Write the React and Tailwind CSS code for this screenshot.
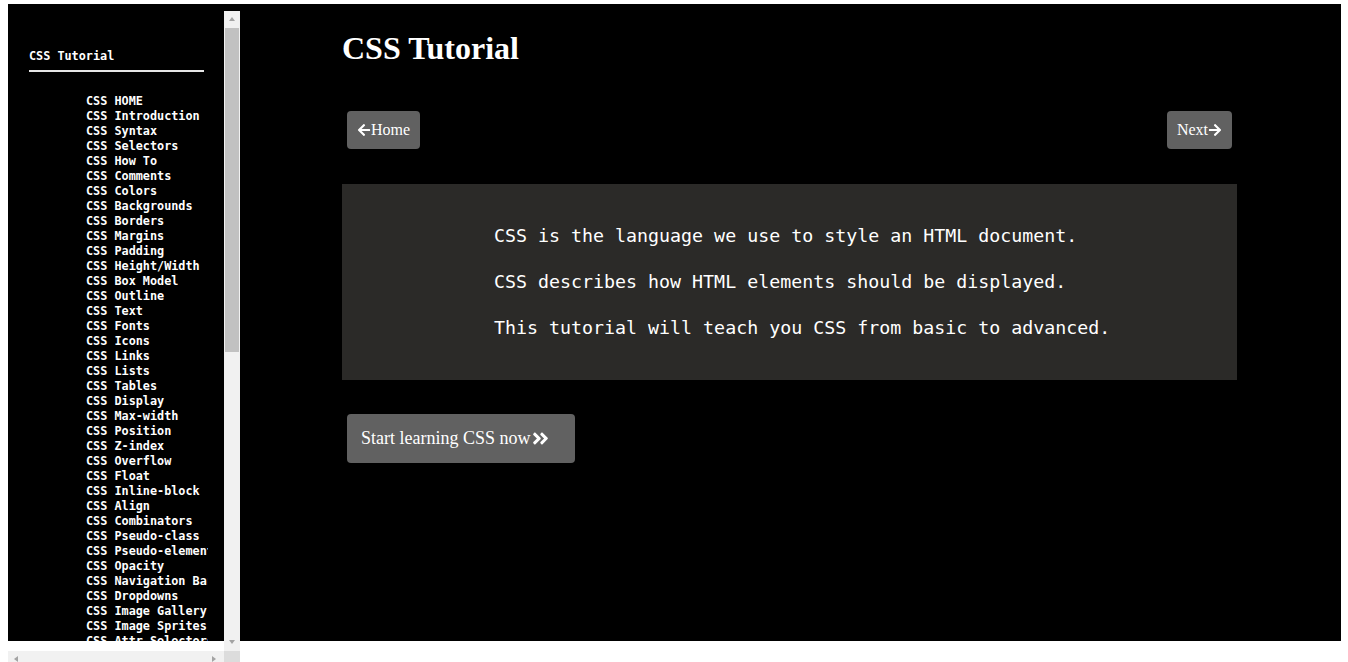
import React from 'react';
import { FaArrowLeft, FaArrowRight, FaAngleDoubleRight } from 'react-icons/fa';

const topics = [
  'HOME', 'Introduction', 'Syntax', 'Selectors', 'How To', 'Comments', 'Colors',
  'Backgrounds', 'Borders', 'Margins', 'Padding', 'Height/Width', 'Box Model',
  'Outline', 'Text', 'Fonts', 'Icons', 'Links', 'Lists', 'Tables', 'Display',
  'Max-width', 'Position', 'Z-index', 'Overflow', 'Float', 'Inline-block', 'Align',
  'Combinators', 'Pseudo-class', 'Pseudo-element', 'Opacity', 'Navigation Bar',
  'Dropdowns', 'Image Gallery', 'Image Sprites', 'Attr Selectors', 'Forms', 'Counters',
];

const mono = "font-['DejaVu_Sans_Mono','Liberation_Mono',monospace]";
const serif = "font-['Liberation_Serif','Times_New_Roman',serif]";

// small triangles for the fake scrollbar buttons
const Tri = ({ dir }) => {
  const pts = {
    up: '4,1 7,5 1,5',
    down: '1,1 7,1 4,5',
    left: '1,4 5,1 5,7',
    right: '1,1 5,4 1,7',
  }[dir];
  return (
    <svg width="8" height="8" viewBox="0 0 8 8" className="block">
      <polygon points={pts} fill="#a3a3a3" />
    </svg>
  );
};

const Sidebar = () => (
  <aside className="mt-[7px] flex h-[660px] w-[232px] flex-none flex-col">
    <div className="flex h-[640px]">
      <div className="w-[216px] overflow-hidden">
        <div className={`w-[200px] overflow-hidden pl-[21px] pt-[38px] ${mono} text-[11.8px] font-bold leading-[15px] text-white`}>
          <div className="whitespace-nowrap">CSS Tutorial</div>
          <div className="mt-[6px] h-[2px] w-[175px] bg-[#e6e6e6]" />
          <ul className="mt-[22px] pl-[57px]">
            {topics.map((t) => (
              <li key={t} className="whitespace-nowrap">CSS {t}</li>
            ))}
          </ul>
        </div>
      </div>
      <div className="flex w-4 flex-none flex-col items-center bg-[#f1f1f1]">
        <div className="flex h-[17px] items-center justify-center"><Tri dir="up" /></div>
        <div className="h-[324px] w-[14px] bg-[#c1c1c1]" />
        <div className="flex-1" />
        <div className="flex h-[17px] items-center justify-center"><Tri dir="down" /></div>
      </div>
    </div>
    <div className="flex h-[20px]">
      <div className="flex w-[216px] items-start justify-between bg-[#f1f1f1] px-[5px] pt-[4px]">
        <Tri dir="left" />
        <Tri dir="right" />
      </div>
      <div className="w-4 bg-[#dcdcdc]" />
    </div>
  </aside>
);

const NavButton = ({ children }) => (
  <button className={`flex h-[38px] items-center rounded-[4px] bg-[#616161] px-[10px] ${serif} text-[16px] text-white`}>
    {children}
  </button>
);

export default function App() {
  return (
    <div className="h-[662px] w-[1348px] overflow-hidden bg-white pl-2 pt-1">
      <div className="flex h-[637px] w-[1333px] bg-black">
        <Sidebar />
        <main className="flex-1 pl-[102px] pr-[104px] pt-[26px]">
          <h1 className={`${serif} text-[32px] font-bold leading-[37px] text-white`}>CSS Tutorial</h1>

          <div className="mx-[5px] mt-[44px] flex justify-between">
            <NavButton>
              <FaArrowLeft size={14} />
              Home
            </NavButton>
            <NavButton>
              Next
              <FaArrowRight size={14} />
            </NavButton>
          </div>

          <div className={`mt-[35px] flex flex-col gap-[20px] bg-[#2b2a28] py-[39px] pl-[152px] ${mono} text-[18.3px] leading-[26px] text-white`}>
            <p>CSS is the language we use to style an HTML document.</p>
            <p>CSS describes how HTML elements should be displayed.</p>
            <p>This tutorial will teach you CSS from basic to advanced.</p>
          </div>

          <button className={`ml-[5px] mt-[34px] flex h-[49px] items-center rounded-[4px] bg-[#616161] pl-[14px] pr-[25px] ${serif} text-[18px] text-white`}>
            Start learning CSS now
            <FaAngleDoubleRight size={19} />
          </button>
        </main>
      </div>
    </div>
  );
}
